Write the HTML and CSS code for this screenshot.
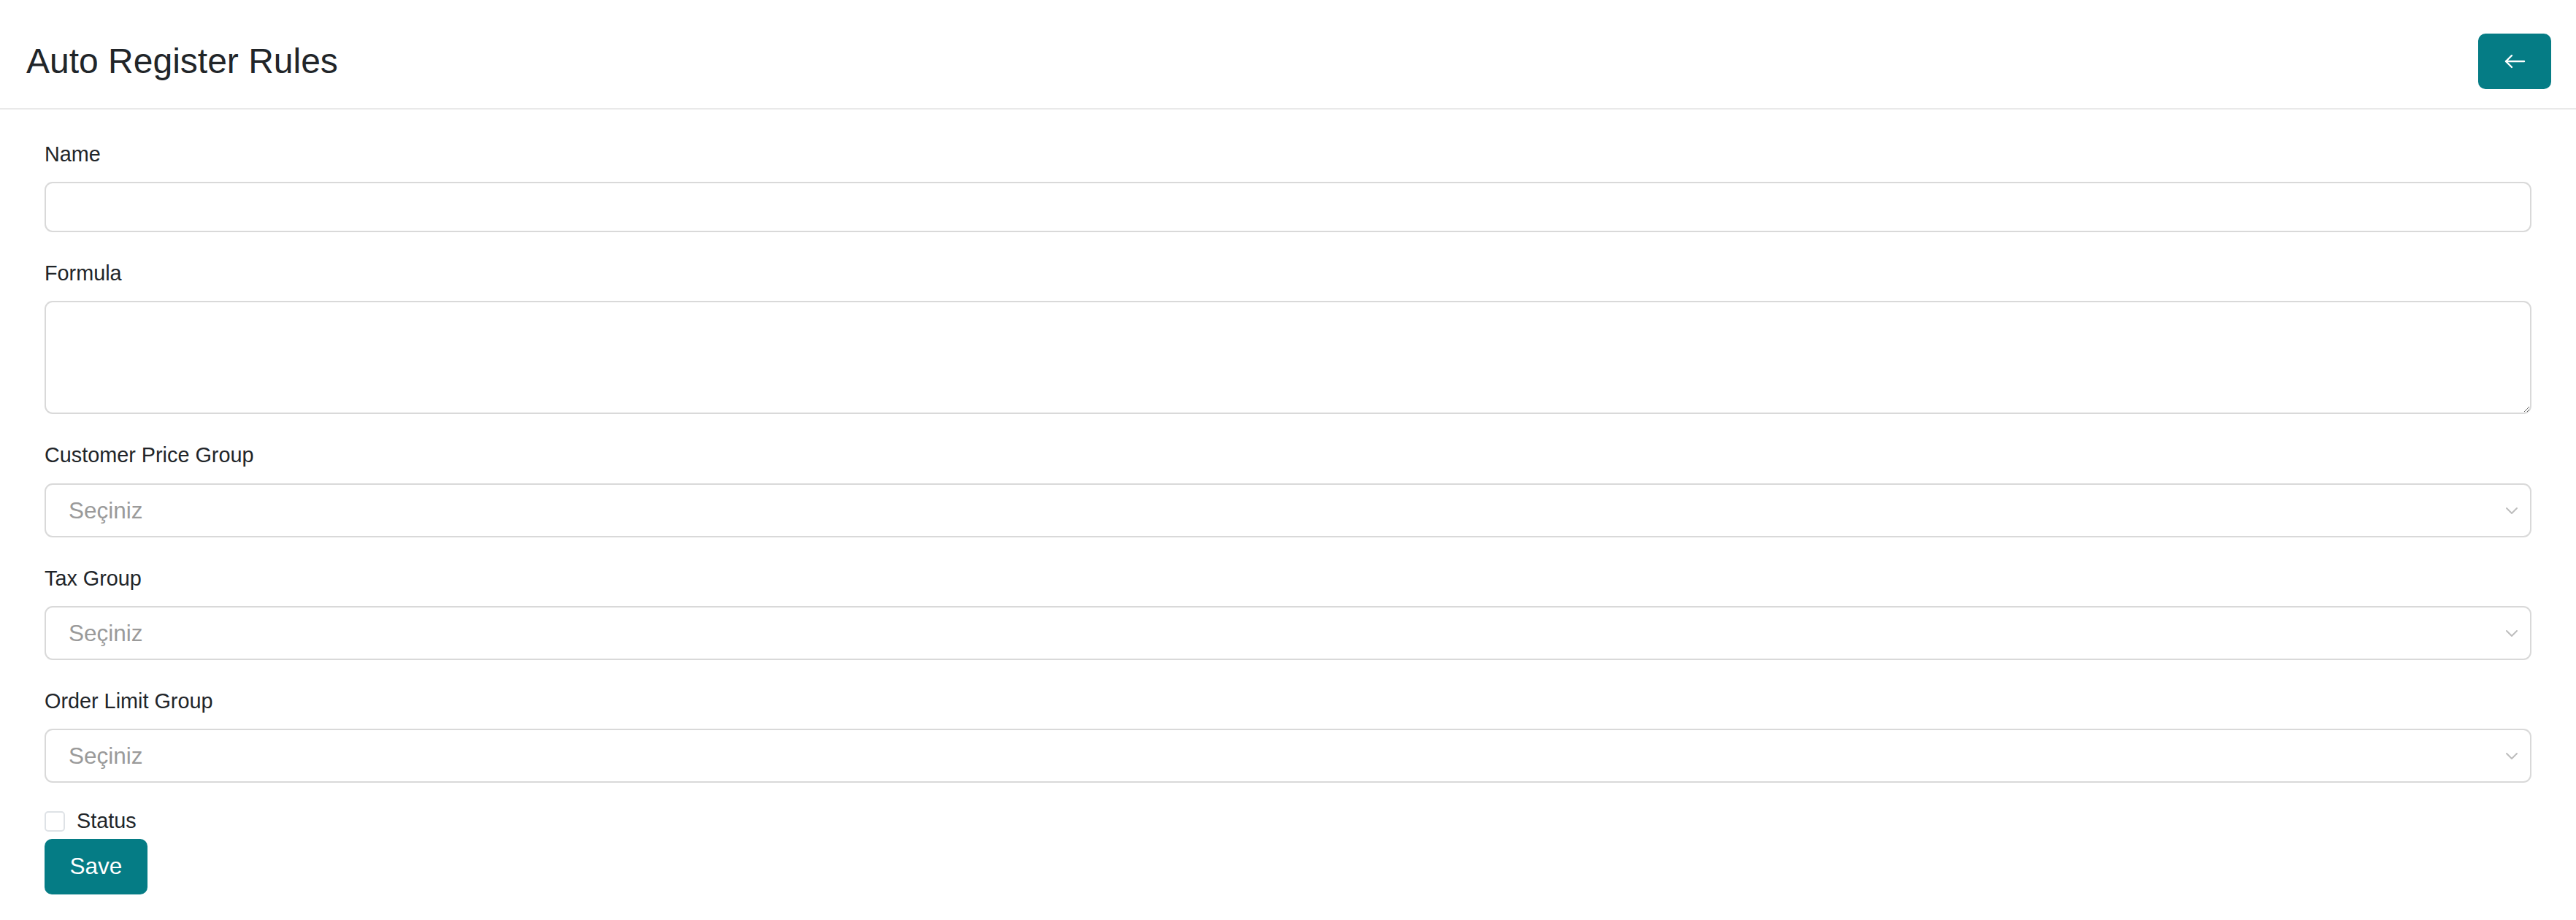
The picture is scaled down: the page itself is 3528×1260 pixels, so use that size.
FILE: index.html
```html
<!DOCTYPE html>
<html lang="en">
<head>
  <meta charset="UTF-8">
  <meta name="viewport" content="width=device-width, initial-scale=1.0">
  <title>Auto Register Rules</title>
  <link rel="stylesheet" href="styles.css">
</head>
<body>

  <div class="page-header">
    <h1 class="page-title">Auto Register Rules</h1>
    <button class="back-btn" type="button" aria-label="Back">
      <svg width="30" height="20" viewBox="0 0 30 20" fill="none" stroke="#fff" stroke-width="2.4" stroke-linecap="round" stroke-linejoin="round">
        <path d="M28 10H3"/>
        <path d="M11 2L3 10L11 18"/>
      </svg>
    </button>
  </div>

  <form class="rule-form">
    <div class="field">
      <label for="name">Name</label>
      <input type="text" id="name" class="form-input">
    </div>

    <div class="field">
      <label for="formula">Formula</label>
      <textarea id="formula" class="form-textarea"></textarea>
    </div>

    <div class="field">
      <label for="price-group">Customer Price Group</label>
      <div class="select-wrap">
        <select id="price-group" class="form-select">
          <option value="">Seçiniz</option>
        </select>
        <svg class="chevron" width="18" height="11" viewBox="0 0 18 11" fill="none" stroke="#bdbdbd" stroke-width="2" stroke-linecap="round" stroke-linejoin="round">
          <path d="M2 2L9 9L16 2"/>
        </svg>
      </div>
    </div>

    <div class="field">
      <label for="tax-group">Tax Group</label>
      <div class="select-wrap">
        <select id="tax-group" class="form-select">
          <option value="">Seçiniz</option>
        </select>
        <svg class="chevron" width="18" height="11" viewBox="0 0 18 11" fill="none" stroke="#bdbdbd" stroke-width="2" stroke-linecap="round" stroke-linejoin="round">
          <path d="M2 2L9 9L16 2"/>
        </svg>
      </div>
    </div>

    <div class="field">
      <label for="limit-group">Order Limit Group</label>
      <div class="select-wrap">
        <select id="limit-group" class="form-select">
          <option value="">Seçiniz</option>
        </select>
        <svg class="chevron" width="18" height="11" viewBox="0 0 18 11" fill="none" stroke="#bdbdbd" stroke-width="2" stroke-linecap="round" stroke-linejoin="round">
          <path d="M2 2L9 9L16 2"/>
        </svg>
      </div>
    </div>

    <div class="check-row">
      <input type="checkbox" id="status" class="form-check">
      <label for="status">Status</label>
    </div>

    <button type="submit" class="save-btn">Save</button>
  </form>

</body>
</html>
```

FILE: styles.css
```css
body {
  font-family: 'Liberation Sans', Arial, sans-serif;
  background: #fff;
  color: #212529;
  margin: 0;
  padding: 0;
}

.page-header {
  display: flex;
  justify-content: space-between;
  align-items: center;
  height: 128px;
  padding: 20px 34px 0 36px;
  border-bottom: 2px solid #e9e9e9;
}

.page-title {
  font-size: 48px;
  font-weight: normal;
  margin: 0;
  padding-bottom: 2px;
}

.back-btn {
  display: flex;
  justify-content: center;
  align-items: center;
  width: 100px;
  height: 76px;
  background: #057c85;
  border: none;
  border-radius: 10px;
  cursor: pointer;
}

.rule-form {
  padding: 40px 61px;
}

.field {
  margin-bottom: 35px;
}

.field label {
  display: block;
  font-size: 28.8px;
  line-height: 1.5;
  margin-bottom: 16px;
}

.form-input,
.form-textarea,
.form-select {
  display: block;
  box-sizing: border-box;
  width: 100%;
  border: 2px solid #d9d9d9;
  border-radius: 11px;
  background: #fff;
  font-family: inherit;
  margin: 0;
}

.form-input {
  height: 69px;
  padding: 0 30px;
  font-size: 28.8px;
}

.form-textarea {
  height: 155px;
  padding: 14px 30px;
  font-size: 28.8px;
  resize: vertical;
}

.select-wrap {
  position: relative;
}

.form-select {
  height: 74px;
  padding: 0 60px 0 31px;
  font-size: 31.5px;
  color: #9a9a9a;
  appearance: none;
  -webkit-appearance: none;
}

.chevron {
  position: absolute;
  right: 18px;
  top: 32px;
  pointer-events: none;
}

.check-row {
  display: flex;
  align-items: center;
  height: 40px;
  margin-top: -2px;
}

.form-check {
  appearance: none;
  -webkit-appearance: none;
  box-sizing: border-box;
  width: 28px;
  height: 28px;
  margin: 0 16px 0 0;
  border: 2px solid #dee2e6;
  border-radius: 5px;
  background: #fff;
}

.check-row label {
  font-size: 28.8px;
}

.save-btn {
  display: block;
  width: 141px;
  height: 76px;
  margin-top: 4px;
  background: #057c85;
  color: #fff;
  border: none;
  border-radius: 10px;
  font-family: inherit;
  font-size: 31.5px;
  cursor: pointer;
}
```
